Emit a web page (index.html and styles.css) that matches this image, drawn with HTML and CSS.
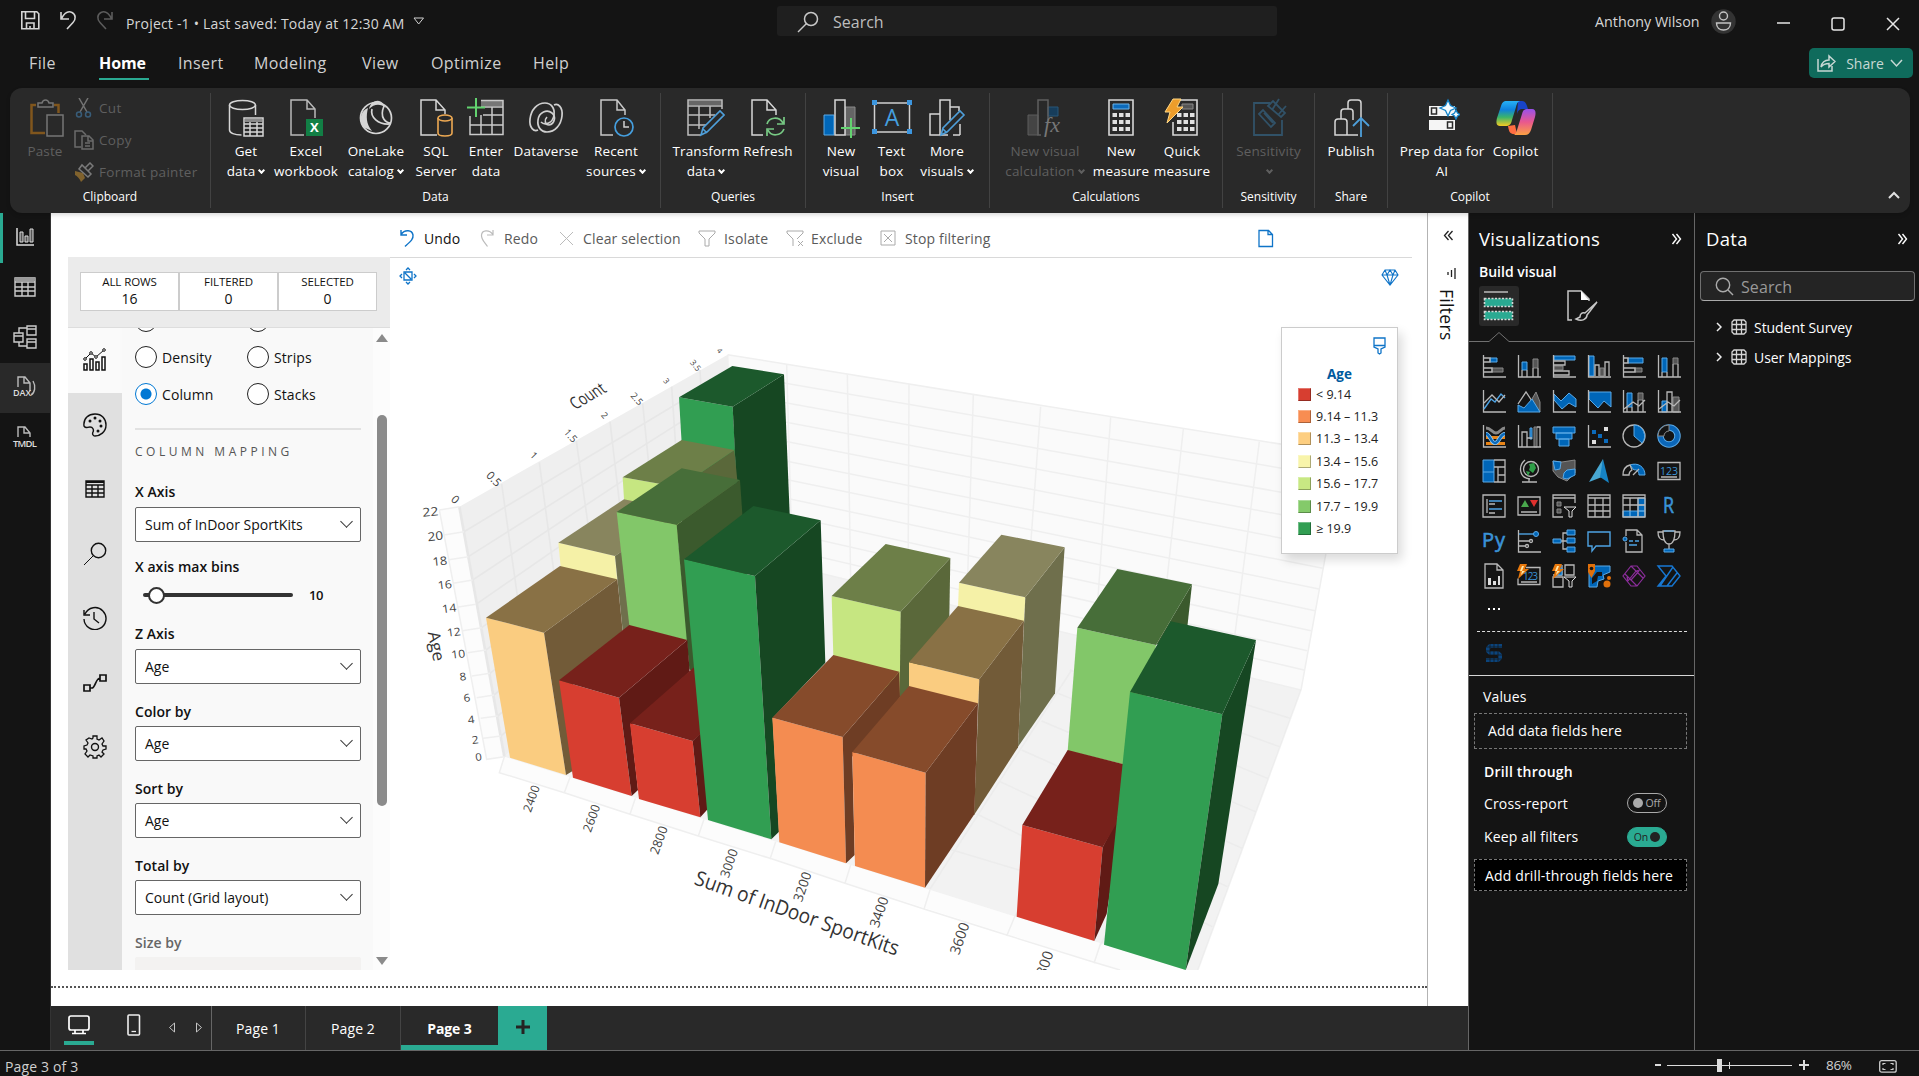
FILE: index.html
```html
<!DOCTYPE html>
<html lang="en">
<head>
<meta charset="utf-8">
<title>Project -1</title>
<link rel="stylesheet" href="styles.css">
</head>
<body>
<div class="app">
<header class="titlebar">
  <svg class="ic quick" width="100" height="26" viewBox="0 0 100 26"><g fill="none" stroke="#d6d6d6" stroke-width="1.6"><path d="M1.8 3.8h15l2 2v15h-17zM5.5 4v6.5h9V4M6.5 21v-6h7.500v6M10 21v-3"/><path d="M41 4v7h8M41.500 10.500C45 4 49 3 52 4.500c4 2 4 7 1 10L47 21"/></g><path fill="none" stroke="#5c5c5c" stroke-width="1.600" d="M92 4v7h-8M91.500 10.500C88 4 84 3 81 4.500c-4 2-4 7-1 10L86 21"/></svg>
  <span class="project">Project -1 • Last saved: Today at 12:30 AM</span>
  <svg class="tri" width="12" height="9"><path d="M1 1h9.500L5.700 7z" fill="none" stroke="#d0d0d0"/></svg>
  <div class="topsearch"><svg width="22" height="22" viewBox="0 0 22 22"><g fill="none" stroke="#c8c8c8" stroke-width="1.500"><circle cx="14" cy="8" r="6.500"/><path d="M9.500 12.500L1 21"/></g></svg><span>Search</span></div>
  <span class="user">Anthony Wilson</span>
  <svg class="avatar" width="25" height="25"><circle cx="12.500" cy="12.500" r="12.200" fill="#333"/><g fill="none" stroke="#c4c4c4" stroke-width="1.400"><circle cx="12.500" cy="7" r="4"/><path d="M5.500 14h14c0 5-3.500 7-7 7s-7-2-7-7z"/></g></svg>
  <svg class="winbtns" width="130" height="20"><g fill="none" stroke="#e6e6e6" stroke-width="1.500"><path d="M3 9h13"/><rect x="58" y="4" width="12" height="12" rx="2"/><path d="M113 4l12 12M125 4l-12 12"/></g></svg>
</header>
<nav class="menubar">
  <span class="m1">File</span><span class="m2 active">Home</span><span class="m3">Insert</span><span class="m4">Modeling</span><span class="m5">View</span><span class="m6">Optimize</span><span class="m7">Help</span>
  <button class="share"><svg width="20" height="20" viewBox="0 0 20 20"><g fill="none" stroke="#c7d8d4" stroke-width="1.500"><path d="M2 6v12h14v-5"/><path d="M5 14c1-5 4-7 8-7V3l6 5.500-6 5.500V10.500c-4 0-6 1-8 3.500z"/></g></svg><span>Share</span><svg width="13" height="9"><path d="M1 1l5.500 6L12 1" fill="none" stroke="#c7d8d4" stroke-width="1.500"/></svg></button>
</nav>

<section class="ribbon">
  <div class="group clip">
    <div class="items">
      <div class="cmd off paste"><svg width="36" height="40" viewBox="0 0 36 40"><path d="M7 7H2.500v28H16M25 7h4.500v8" fill="none" stroke="#80561d" stroke-width="2.500"/><path d="M9 9V5h4c1-4 6-4 7 0h4v4zM18 17h16v21H18z" fill="#292929" stroke="#757575" stroke-width="1.500"/></svg><span>Paste</span></div>
      <div class="smalls">
        <div class="small cut"><svg width="20" height="20" viewBox="0 0 20 20"><path d="M5 0l8 14M14 0L6 14" fill="none" stroke="#737373" stroke-width="1.500"/><g fill="none" stroke="#385c78" stroke-width="1.500"><circle cx="5" cy="16.500" r="2.500"/><circle cx="14" cy="16.500" r="2.500"/></g></svg><span>Cut</span></div>
        <div class="small"><svg width="20" height="20" viewBox="0 0 20 20"><g fill="none" stroke="#6b6b6b" stroke-width="1.500"><path d="M7 17H1V1h7l4 4"/><path d="M8 6h7l4 4v9H8zM14 6v5h5M11 13h5M11 16h5"/></g></svg><span>Copy</span></div>
        <div class="small"><svg width="20" height="20" viewBox="0 0 20 20"><path d="M1 9l8 2 2 5-4 4C6 17 3 14 1 13z" fill="#80622d"/><path d="M5 7l9 8 3-3-9-9zM11 6l5-5 3 3-5 5" fill="none" stroke="#7a7a7a" stroke-width="1.500"/></svg><span>Format painter</span></div>
      </div>
    </div><div class="gname">Clipboard</div>
  </div>
  <div class="group data">
    <div class="items">
      <div class="cmd w62"><svg width="36" height="40" viewBox="0 0 36 40"><g fill="none" stroke="#d6d6d6" stroke-width="1.500"><ellipse cx="14.500" cy="7" rx="13" ry="4.500"/><path d="M1.500 7v25c0 3 5 5 12 5M27.500 7v10"/><path d="M16 20h19v18H16zM16 26h19M16 30h19M16 34h19M22 24v14M29 24v14"/></g><path fill="#8a8a8a" d="M17 21h17v3H17z"/></svg><span>Get<br>data<i class="dn"></i></span></div>
      <div class="cmd w58"><svg width="36" height="40" viewBox="0 0 36 40"><path d="M16 37H3V2h16l8 9v9M19 2v9h8" fill="none" stroke="#b9b9b9" stroke-width="1.500"/><path fill="#127f45" d="M18 21h17v17H18z"/><text x="26.500" y="34" text-anchor="middle" font-size="13" font-weight="700" fill="#fff">X</text></svg><span>Excel<br>workbook</span></div>
      <div class="cmd w82"><svg width="36" height="40" viewBox="0 0 36 40"><g fill="none" stroke="#d6d6d6" stroke-width="1.700"><circle cx="18" cy="20" r="15.500"/><path d="M14 11c-2 8 6 16 18 15M26 8c-5 12 2 17 7 17"/></g><path fill="#d6d6d6" d="M11 11c2-9 11-11 15-4l2 3c-6-5-12-4-17 1zM10 10C4 12 0 20 5 29l9 4C8 26 8 18 10 10z"/></svg><span>OneLake<br>catalog<i class="dn"></i></span></div>
      <div class="cmd w38"><svg width="36" height="40" viewBox="0 0 36 40"><path d="M19 37H3V2h15l9 10v4M18 2v10h9" fill="none" stroke="#d6d6d6" stroke-width="1.500"/><g fill="#292929" stroke="#eda953" stroke-width="1.600"><path d="M20 20v15c0 4 14 4 14 0V20"/><ellipse cx="27" cy="20" rx="7" ry="3"/></g></svg><span>SQL<br>Server</span></div>
      <div class="cmd w62"><svg width="38" height="40" viewBox="0 0 38 40"><path fill="#767676" d="M14 3h22v5H14z"/><path d="M14 2.500h22v34H3V18M3 27h33M16 17h20M14 9h22M14 17v19M25 9v27" fill="none" stroke="#cacaca" stroke-width="1.500"/><path d="M9 0v19M0 9.500h18" stroke="#62d26f" stroke-width="2"/></svg><span>Enter<br>data</span></div>
      <div class="cmd w58"><svg width="38" height="40" viewBox="0 0 38 40"><g fill="none" stroke="#d0d0d0" stroke-width="1.700"><path d="M27 7c4-2 9 2 8 11-1 9-7 16-15 16-6 0-10-5-9-12 1-8 9-11 14-7 4 3 3 11-3 12-4 0-5-5-2-8"/><path d="M11 32c-4 2-9-2-8-11C4 12 10 5 18 5c6 0 10 5 9 12-1 8-9 11-13 7"/></g></svg><span>Dataverse</span></div>
      <div class="cmd w82"><svg width="38" height="40" viewBox="0 0 38 40"><path d="M16 37H4V2h16l8 10v5M20 2v10h8" fill="none" stroke="#c8c8c8" stroke-width="1.500"/><circle cx="27" cy="29" r="9" fill="#292929" stroke="#459fdf" stroke-width="1.700"/><path d="M27 23v6h5" fill="none" stroke="#d0d0d0" stroke-width="1.500"/></svg><span>Recent<br>sources<i class="dn"></i></span></div>
    </div><div class="gname">Data</div>
  </div>
  <div class="group queries">
    <div class="items">
      <div class="cmd w90"><svg width="38" height="40" viewBox="0 0 38 40"><path fill="#666" d="M1 3h34v4H1z"/><path d="M14 37H1V2h34v9M1 8h34M1 17h27M1 27h20M12 8v23M23 8v12" fill="none" stroke="#bdbdbd" stroke-width="1.500"/><path d="M14 37l2-7 17-17 4 4-17 17zM16 31l4 4" fill="#292929" stroke="#4e9fda" stroke-width="1.600"/></svg><span>Transform<br>data<i class="dn"></i></span></div>
      <div class="cmd w34"><svg width="36" height="40" viewBox="0 0 36 40"><path d="M13 37H2V2h15l9 10v5M17 2v10h9" fill="none" stroke="#d6d6d6" stroke-width="1.500"/><path d="M17 26c2-7 12-8 16-1M34 19v7h-7M34 31c-3 7-13 8-16 1M17 38v-7h7" fill="none" stroke="#77c984" stroke-width="1.700"/></svg><span>Refresh</span></div>
    </div><div class="gname">Queries</div>
  </div>
  <div class="group insert">
    <div class="items">
      <div class="cmd w70"><svg width="38" height="40" viewBox="0 0 38 40"><path fill="#0066b8" stroke="#5aa9e6" d="M2 17h10v20H2z"/><path fill="#656565" stroke="#8b8b8b" d="M23 9h10v28H23z"/><path fill="#292929" stroke="#d6d6d6" stroke-width="1.500" d="M13 2h10v35H13z"/><path d="M29 20v20M19 30h19" stroke="#62d26f" stroke-width="2"/></svg><span>New<br>visual</span></div>
      <div class="cmd w31"><svg width="40" height="40" viewBox="0 0 40 40"><path fill="none" stroke="#d0d0d0" stroke-width="1.500" d="M2.500 5h35v29h-35z"/><path fill="#3c96df" d="M0 2h5v5H0zM35 2h5v5h-5zM0 31h5v5H0zM35 31h5v5h-5z"/><text x="20" y="28" text-anchor="middle" font-size="23" fill="#459fdf">A</text></svg><span>Text<br>box</span></div>
      <div class="cmd w80"><svg width="38" height="40" viewBox="0 0 38 40"><path fill="none" stroke="#d6d6d6" stroke-width="1.500" d="M12 37V2h10v20M12 16H2v21h10M22 9h9v4M20 37h-8M32 37V26M32 37h-7"/><path d="M13 37l2-7 17-17 4 4-17 17zM15 31l4 4" fill="#292929" stroke="#4e9fda" stroke-width="1.600"/></svg><span>More<br>visuals<i class="dn"></i></span></div>
    </div><div class="gname">Insert</div>
  </div>
  <div class="group calc">
    <div class="items">
      <div class="cmd off w110"><svg width="40" height="40" viewBox="0 0 40 40"><path fill="#444" stroke="#5c5c5c" d="M3 17h10v20H3z"/><path fill="#173d5b" stroke="#285778" d="M23 9h10v9H23z"/><path fill="none" stroke="#5f5f5f" stroke-width="1.500" d="M16 37h-3V2h10v20"/><text x="19" y="34" font-size="22" font-style="italic" class="serif" fill="#777">fx</text></svg><span>New visual<br>calculation<i class="dn"></i></span></div>
      <div class="cmd w42"><svg width="26" height="40" viewBox="0 0 26 40"><path fill="none" stroke="#d6d6d6" stroke-width="1.600" d="M1 2h24v35H1z"/><path fill="#0b6abb" stroke="#6db4ea" d="M5 6h16v5H5z"/><path stroke="#e0e0e0" stroke-width="4" stroke-dasharray="4.500 2" d="M4.500 17h18M4.500 24h18M4.500 31h18"/></svg><span>New<br>measure</span></div>
      <div class="cmd w80"><svg width="38" height="40" viewBox="0 0 38 40"><path fill="none" stroke="#d6d6d6" stroke-width="1.600" d="M17 2h17v35H10V24"/><path fill="#555" stroke="#8a8a8a" d="M19 6h11v5H19z"/><path stroke="#e0e0e0" stroke-width="4" stroke-dasharray="4.500 2" d="M14 17h18M14 24h18M14 31h18"/><path fill="#ed9d2b" stroke="#ffd784" d="M10 1h8l-4 8h6L4 25l3-11H2z"/></svg><span>Quick<br>measure</span></div>
    </div><div class="gname">Calculations</div>
  </div>
  <div class="group sens">
    <div class="items"><div class="cmd off w91"><svg width="38" height="40" viewBox="0 0 38 40"><g fill="none" stroke="#315268" stroke-width="1.800"><path d="M20 5H4v32h28V22"/><path d="M9 16l4-4 12 13-4 4zM18 8l5-5 12 12-4 4zM22 12l7-11M28 17l8-9M14 15l9 10"/></g></svg><span>Sensitivity<br><i class="dn"></i></span></div></div><div class="gname">Sensitivity</div>
  </div>
  <div class="group shareg">
    <div class="items"><div class="cmd w72"><svg width="38" height="40" viewBox="0 0 38 40"><g fill="none" stroke="#d6d6d6" stroke-width="1.500"><path d="M26 37H3V24c0-2 1-3 3-3h6c2 0 3 1 3 3v13M9 21v-7c0-2 1-3 3-3h6c2 0 3 1 3 3v8M16 11V5c0-2 1-3 3-3h7c2 0 3 1 3 3v15"/></g><path d="M29 39V20M21 28l8-8 8 8" fill="none" stroke="#4e9fda" stroke-width="1.800"/></svg><span>Publish</span></div></div><div class="gname">Share</div>
  </div>
  <div class="group cop">
    <div class="items">
      <div class="cmd w108"><svg class="prep" width="32" height="40" viewBox="0 0 32 40"><path fill="#f5f5f5" d="M1 8h26v10H1zM1 22h26v10H1z"/><path fill="none" stroke="#292929" stroke-width="1.500" d="M3.500 10h5v6h-5zM19.500 24h5v6h-5z"/><path fill="#f4fbff" stroke="#1383c8" stroke-width="1.300" d="M20 2l2.500 5.500L28 10l-5.500 2.500L20 18l-2.500-5.500L12 10l5.500-2.500zM28 12l1.500 3 2.500 1.500-2.500 1.500-1.500 3-1.500-3-2.500-1.500 2.500-1.500z"/></svg><span>Prep data for<br>AI</span></div>
      <div class="cmd w39"><svg width="40" height="40" viewBox="0 0 40 40"><defs><linearGradient id="ca" x1="0" y1="0" x2="0" y2="1"><stop offset="0" stop-color="#27b1f5"/><stop offset=".35" stop-color="#0f81dc"/><stop offset=".65" stop-color="#3bb469"/><stop offset="1" stop-color="#f7cb22"/></linearGradient><linearGradient id="cb" x1="0" y1="0" x2="0" y2="1"><stop offset="0" stop-color="#9851eb"/><stop offset=".5" stop-color="#e9588e"/><stop offset="1" stop-color="#fba143"/></linearGradient></defs><path fill="#1844c8" d="M22 3h4c3 0 4 2 5 5l1 3h-5c-4 0-5 2-6 5z"/><path fill="#ff6d42" d="M12 28l7-1 2 9h-3c-4 0-5-2-6-8z"/><path fill="url(#ca)" d="M11 3h14c-3 0-4 2-5 6l-4 13c-1 4-2 6-7 6H4c-4 0-4-4-3-8l4-12c1-3 2-5 6-5z"/><path fill="url(#cb)" d="M29 37H17c2 0 3-2 4-5l5-16c1-4 2-5 6-5h4c4 0 4 4 3 8l-4 13c-1 3-3 5-6 5z"/></svg><span>Copilot</span></div>
    </div><div class="gname">Copilot</div>
  </div>
  <svg class="collapse" width="14" height="9"><path d="M2 7l5-5 5 5" fill="none" stroke="#e0e0e0" stroke-width="2"/></svg>
</section>

<main class="main">
<aside class="rail">
  <div class="on"><svg width="24" height="24" viewBox="0 0 24 24"><path d="M4 3v17h17" fill="none" stroke="#ddd" stroke-width="1.500"/><path d="M7 7h3v10H7zM12 11h3v6h-3zM17 4h3v13h-3z" fill="#555" stroke="#ddd"/></svg></div>
  <div><svg width="24" height="24" viewBox="0 0 24 24"><path d="M2 3h20v18H2zM2 7h20M2 12h20M2 16h20M9 7v14M15 7v14" fill="none" stroke="#ccc" stroke-width="1.400"/><path fill="#999" d="M2 3h20v3H2z"/></svg></div>
  <div><svg width="26" height="26" viewBox="0 0 26 26"><g fill="none" stroke="#ccc" stroke-width="1.400"><path d="M2 9h9v9H2zM15 2h9v9h-9zM15 15h9v9h-9zM7 9V4h8M7 18v4h8M2 12h9M15 5h9M15 18h9"/></g></svg></div>
  <div class="sel"><svg width="26" height="26" viewBox="0 0 26 26"><path d="M6 13V3h7l5 6v8M12 3v6h6M21 7c3 5 2 12-2 14" fill="none" stroke="#bbb" stroke-width="1.400"/><text x="1" y="22" font-size="9" font-weight="600" textLength="18" fill="#ddd">DAX</text></svg></div>
  <div><svg width="26" height="26" viewBox="0 0 26 26"><path d="M6 13V3h7l5 6v4M12 3v6h6" fill="none" stroke="#bbb" stroke-width="1.400"/><text x="1" y="23" font-size="9.500" font-weight="600" textLength="24" fill="#ddd">TMDL</text></svg></div>
</aside>

<div class="center">
<div class="work">
<section class="canvas">
  <div class="visual">
    <div class="vtools">
      <span class="t live"><svg width="15" height="19" viewBox="0 0 15 19"><path d="M1 1v5h6M1 5.500C5 0 12 1 13 6c.5 4-2 6-8 11.500" fill="none" stroke="#0f74c8" stroke-width="1.400"/></svg>Undo</span>
      <span class="t redo"><svg width="15" height="19" viewBox="0 0 15 19"><path d="M13 1v5H7M13 5.500C9 0 2 1 1.500 6c-.5 4 2 6 6 11.500" fill="none" stroke="#bbb" stroke-width="1.200"/></svg>Redo</span>
      <span class="t clr"><svg width="15" height="19" viewBox="0 0 15 19"><path d="M1 3l13 13M14 3L1 16" fill="none" stroke="#bbb"/></svg>Clear selection</span>
      <span class="t iso"><svg width="18" height="19" viewBox="0 0 18 19"><path d="M1 2h16v2l-6 6v7H7v-7L1 4z" fill="none" stroke="#aaa"/></svg>Isolate</span>
      <span class="t exc"><svg width="18" height="19" viewBox="0 0 18 19"><path d="M1 2h16v2l-6 6M7 17v-7L1 4V2M12 12l5 5M17 12l-5 5" fill="none" stroke="#aaa"/></svg>Exclude</span>
      <span class="t stp"><svg width="16" height="19" viewBox="0 0 16 19"><path d="M1 2h14v14H1zM4 5l8 8M12 5l-8 8" fill="none" stroke="#aaa"/></svg>Stop filtering</span>
      <svg class="doc" width="16" height="19"><path d="M1 1.500h9.500l4 4V17.500H1zM10 1.500v4h4.500" fill="none" stroke="#0f74c8" stroke-width="1.300"/></svg>
    </div>
    <div class="vbody">
      <div class="panel">
        <div class="counts"><div><b>ALL ROWS</b><span>16</span></div><div><b>FILTERED</b><span>0</span></div><div><b>SELECTED</b><span>0</span></div></div>
        <div class="pmain">
          <div class="ptabs">
            <div class="cur"><svg width="24" height="24" viewBox="0 0 24 24"><path d="M1 16h3v6H1zM7 11h3v11H7zM13 14h3v8h-3zM19 9h3v13h-3z" fill="#fff" stroke="#111" stroke-width="1.500"/><path d="M2 11l6-6 5 4 8-7" fill="none" stroke="#111"/><g fill="#fff" stroke="#111"><circle cx="2" cy="11" r="1.300"/><circle cx="8" cy="5" r="1.300"/><circle cx="13" cy="9" r="1.300"/><circle cx="21" cy="2" r="1.300"/></g></svg></div>
            <div><svg width="24" height="24" viewBox="0 0 24 24"><path d="M1 13C0 5 6 1 12 1c7 0 11 5 11 11 0 7-6 11-11 11-2 0-3-2-2-4s0-5-3-5-4 2-6-1z" fill="none" stroke="#111" stroke-width="1.400"/><g fill="#111"><circle cx="7" cy="8" r="1.500"/><circle cx="12" cy="5" r="1.500"/><circle cx="17" cy="8" r="1.500"/><circle cx="18" cy="13" r="1.500"/><circle cx="15" cy="18" r="1.500"/></g></svg></div>
            <div><svg width="20" height="18" viewBox="0 0 20 18"><path d="M1 1h18v16H1zM1 5h18M1 9h18M1 13h18M7 5v12M13 5v12" fill="none" stroke="#111" stroke-width="1.400"/><path fill="#111" d="M1 1h18v2H1z"/></svg></div>
            <div><svg width="24" height="24" viewBox="0 0 24 24"><path d="M10 14L1 23" stroke="#111"/><circle cx="15.500" cy="8.500" r="7.200" fill="none" stroke="#111" stroke-width="1.400"/></svg></div>
            <div><svg width="24" height="24" viewBox="0 0 24 24"><path d="M1 4v5h6M2 8a11 11 0 1 1-1 5M11 6v7l5 4" fill="none" stroke="#111" stroke-width="1.400"/></svg></div>
            <div><svg width="24" height="20" viewBox="0 0 24 20"><path d="M1 12h6v6H1zM17 2h6v6h-6zM7 15h2c3 0 4-10 8-10" fill="none" stroke="#111" stroke-width="1.700"/></svg></div>
            <div><svg width="24" height="24" viewBox="0 0 24 24"><circle cx="12" cy="12" r="3.500" fill="none" stroke="#111" stroke-width="1.400"/><path d="M10 1h4v3l2 1 3-2 2 3-2 3 1 2h3v3l-3 1-1 2 2 2-3 3-2-2-2 1v2h-4v-2l-3-1-2 2-3-3 2-3-1-2H1v-3l3-1 1-2-2-3 3-2 3 1 1-1z" fill="none" stroke="#111" stroke-width="1.300"/></svg></div>
          </div>
          <div class="form">
            <div class="radios clipped"><label><i></i></label><label><i></i></label></div>
            <div class="radios"><label><i></i>Density</label><label><i></i>Strips</label></div>
            <div class="radios r2"><label><i class="chk"></i>Column</label><label><i></i>Stacks</label></div>
            <hr>
            <div class="sect">COLUMN MAPPING</div>
            <div class="lab l1">X Axis</div><div class="select">Sum of InDoor SportKits<i></i></div>
            <div class="lab l2">X axis max bins</div><div class="slider"><div class="track"><i></i></div><span>10</span></div>
            <div class="lab l3">Z Axis</div><div class="select">Age<i></i></div>
            <div class="lab">Color by</div><div class="select">Age<i></i></div>
            <div class="lab">Sort by</div><div class="select">Age<i></i></div>
            <div class="lab">Total by</div><div class="select">Count (Grid layout)<i></i></div>
            <div class="lab dim">Size by</div><div class="select ghost"></div>
          </div>
          <div class="scroll"><i class="up"></i><div class="thumb"></div><i class="down"></i></div>
        </div>
      </div>
      <div class="plot">
        <svg class="chart" viewBox="-30 144 3066 2136" width="1022" height="712">
          <g class="wall">
            <polygon fill="#fcfcfc" points="118,900 178,890 313,1640 260,1648"/>
            <polygon fill="#fcfcfc" points="313,1640 2390,2290 2380,2300 660,2300 2160,2280 298,1688"/>
            <polygon fill="#efefef" points="178,890 983,434 1005,1026 313,1640"/>
            <polygon fill="#fafafa" points="983,434 2832,733 2703,1440 1005,1026"/>
            <polygon fill="#f2f2f2" points="313,1640 1005,1026 2703,1440 2390,2290"/>
          </g>
          <g fill="none" stroke="#e7e7e7" stroke-width="5">
            <path d="M192 965L983 490M205 1040L983 547M218 1110L983 604M228 1183L983 660M245 1253L983 718M258 1320L983 775M270 1390L983 832M282 1455L990 880M293 1518L990 930M303 1578L995 980"/>
            <path d="M305 822L400 1500M418 757L490 1300M529 693L600 1200M630 635L690 1150M728 580L780 1100M815 530L850 1050M900 480L930 1030"/>
            <path d="M178 890L313 1640" stroke-width="8"/>
          </g>
          <g fill="none" stroke="#efefef" stroke-width="4.500">
            <path d="M983 434L2832 733"/>
            <path d="M983 490L2817 804M983 547L2805 876M983 604L2793 942M983 660L2780 1011M983 718L2768 1075M985 773L2757 1137M987 828L2745 1202M990 880L2733 1262M993 930L2722 1322M997 980L2712 1380M1000 1026L2703 1440"/>
            <path d="M983 434L1005 1026M1160 465L1177 1060M1342 493L1352 1110M1527 522L1524 1150M1720 555L1700 1195M1922 590L1875 1240M2132 622L2085 1290M2350 657L2276 1340M2578 695L2490 1390M2832 733L2703 1440"/>
            <path stroke="#e8e8e8" d="M1590 2037L2015 1380M1845 2118L2270 1450M2102 2204L2480 1450M1590 1900L2390 2140M1730 1812L2437 2150M1800 1715L2482 2030M1865 1620L2527 1915M1925 1533L2566 1805M1975 1450L2603 1705M2010 1380L2638 1610M2050 1330L2670 1525M2390 2290L2703 1440" opacity=".6"/>
            <path d="M118 900L260 1648 313 1640M118 900L178 890M132 975L192 965M146 1049L205 1040M160 1120L218 1110M170 1192L228 1183M188 1262L245 1253M203 1328L258 1320M216 1398L270 1390M230 1463L282 1455M242 1525L293 1518M250 1585L303 1578"/>
            <path d="M313 1640L298 1688 493 1748 690 1813 895 1878 1110 1945 1335 2020 1572 2097 1820 2175 2082 2257 2160 2280M510 1702L493 1748M706 1765L690 1813M912 1828L895 1878M1127 1895L1110 1948M1352 1965L1335 2020M1590 2040L1572 2097M1845 2118L1820 2178M2102 2200L2082 2260"/>
          </g>
          <g class="deepgreen"><polygon class="f" points="837,562 998,590 1020,1000 860,960"/><polygon class="s" points="998,590 1152,493 1169,912 1100,960 1018,1000"/><polygon class="t" points="837,562 997,468 1152,493 998,590"/></g>
          <g class="lime"><polygon class="f" points="668,802 838,832 845,1000 680,1000"/><polygon class="s" points="838,832 1003,720 1012,812 850,1000"/><polygon class="t" points="668,802 845,690 1003,720 838,832"/></g>
          <g class="cream"><polygon class="f" points="475,998 645,1038 652,1115 482,1070"/><polygon class="s" points="645,1038 700,1000 700,1400 668,1260"/><polygon class="t" points="475,998 672,868 850,905 645,1038"/></g>
          <g class="green"><polygon class="f" points="650,906 830,945 864,1292 688,1247"/><polygon class="s" points="830,945 1020,810 1040,1100 900,1400 868,1378"/><polygon class="t" points="650,906 845,775 1020,810 830,945"/></g>
          <g class="sand"><polygon class="f" points="258,1223 432,1268 498,1695 330,1643"/><polygon class="s" points="432,1268 652,1108 668,1262 520,1400 518,1683 498,1695"/><polygon class="t" points="258,1223 480,1068 652,1108 432,1268"/></g>
          <g class="red"><polygon class="f" points="477,1411 657,1463 695,1758 519,1703"/><polygon class="s" points="657,1463 862,1290 869,1385 692,1545 714,1740 695,1758"/><polygon class="t" points="477,1411 688,1245 862,1290 657,1463"/></g>
          <g class="red"><polygon class="f" points="690,1540 878,1593 901,1822 717,1767"/><polygon class="s" points="878,1593 940,1530 940,1780 918,1803 901,1822"/><polygon class="t" points="690,1540 880,1373 1000,1400 940,1537 878,1593"/></g>
          <g class="lime"><polygon class="f" points="1295,1158 1502,1205 1504,1480 1300,1338"/><polygon class="s" points="1502,1205 1651,1044 1648,1218 1504,1470 1499,1460"/><polygon class="t" points="1295,1158 1457,1002 1651,1044 1502,1205"/></g>
          <g class="deepgreen"><polygon class="f" points="852,1048 1065,1098 1114,1888 924,1830"/><polygon class="s" points="1065,1098 1262,931 1276,1358 1118,1524 1137,1865 1114,1888"/><polygon class="t" points="852,1048 1060,888 1262,931 1065,1098"/></g>
          <g class="rust"><polygon class="f" points="1117,1523 1328,1581 1338,1960 1138,1897"/><polygon class="s" points="1328,1581 1498,1385 1500,1462 1357,1640 1364,1935 1338,1960"/><polygon class="t" points="1117,1523 1300,1335 1498,1385 1328,1581"/></g>
          <g class="cream"><polygon class="f" points="1677,1118 1876,1162 1872,1235 1674,1192"/><polygon class="s" points="1876,1162 1994,1012 1965,1450 1854,1610"/><polygon class="t" points="1677,1118 1804,974 1994,1012 1876,1162"/></g>
          <g class="sand"><polygon class="f" points="1527,1357 1738,1408 1735,1482 1527,1430"/><polygon class="s" points="1738,1408 1872,1232 1854,1612 1722,1815"/><polygon class="t" points="1527,1357 1674,1188 1872,1232 1738,1408"/></g>
          <g class="rust"><polygon class="f" points="1357,1626 1577,1688 1575,2033 1365,1968"/><polygon class="s" points="1577,1688 1734,1480 1723,1813 1575,2033"/><polygon class="t" points="1357,1626 1527,1428 1734,1480 1577,1688"/></g>
          <g class="green"><polygon class="f" points="2032,1253 2268,1305 2200,1670 2003,1622"/><polygon class="s" points="2268,1305 2376,1123 2362,1250"/><polygon class="t" points="2032,1253 2152,1077 2376,1123 2268,1305"/></g>
          <g class="red"><polygon class="f" points="1867,1845 2108,1912 2083,2193 1850,2120"/><polygon class="s" points="2108,1912 2170,1790 2120,2112 2083,2193"/><polygon class="t" points="1867,1845 2003,1620 2180,1665 2150,1840 2108,1912"/></g>
          <g class="deepgreen"><polygon class="f" points="2190,1446 2467,1513 2357,2280 2112,2204"/><polygon class="s" points="2467,1513 2568,1290 2455,2022 2357,2280"/><polygon class="t" points="2190,1446 2312,1234 2568,1290 2467,1513"/></g>
          <g class="ticks age">
            <text transform="translate(92 918) rotate(-5) scale(1.16 1)" font-size="36">22</text><text transform="translate(107 991) rotate(-6) scale(1.14 1)" font-size="36">20</text><text transform="translate(121 1066) rotate(-6) scale(1.1 1)" font-size="35">18</text><text transform="translate(136 1136) rotate(-7) scale(1.1 1)" font-size="34">16</text><text transform="translate(149 1207) rotate(-7) scale(1.1 1)" font-size="34">14</text><text transform="translate(163 1278) rotate(-7) scale(1.1 1)" font-size="33">12</text><text transform="translate(176 1344) rotate(-7) scale(1.1 1)" font-size="33">10</text><text transform="translate(190 1411) rotate(-7) scale(1.1 1)" font-size="32">8</text><text transform="translate(202 1475) rotate(-7) scale(1.1 1)" font-size="32">6</text><text transform="translate(215 1540) rotate(-7) scale(1.1 1)" font-size="32">4</text><text transform="translate(227 1601) rotate(-7) scale(1.1 1)" font-size="32">2</text><text transform="translate(237 1652) rotate(-7) scale(1.1 1)" font-size="31">0</text>
          </g>
          <g class="ticks">
            <text transform="translate(158 877) rotate(42)" font-size="34">0</text><text transform="translate(273 815) rotate(46)" font-size="34">0.5</text><text transform="translate(394 743) rotate(46)" font-size="29">1</text><text transform="translate(504 684) rotate(48)" font-size="30">1.5</text><text transform="translate(607 622) rotate(48)" font-size="27">2</text><text transform="translate(703 573) rotate(48)" font-size="28">2.5</text><text transform="translate(793 518) rotate(50)" font-size="24">3</text><text transform="translate(880 472) rotate(50)" font-size="25">3.5</text><text transform="translate(953 427) rotate(50)" font-size="21">4</text>
          </g>
          <g class="ticks">
            <text transform="translate(406 1770) rotate(-70)" font-size="36">2400</text><text transform="translate(587 1829) rotate(-70)" font-size="37">2600</text><text transform="translate(789 1895) rotate(-70)" font-size="38">2800</text><text transform="translate(1000 1964) rotate(-71)" font-size="39">3000</text><text transform="translate(1220 2035) rotate(-71)" font-size="40">3200</text><text transform="translate(1451 2111) rotate(-71)" font-size="41.500">3400</text><text transform="translate(1693 2190) rotate(-71)" font-size="43">3600</text><text transform="translate(1945 2277) rotate(-71)" font-size="44">3800</text>
          </g>
          <g class="axis">
            <text transform="translate(574 572) rotate(-30) skewX(8)" font-size="52" textLength="112" lengthAdjust="spacingAndGlyphs">Count</text>
            <text transform="translate(92 1312) rotate(79)" font-size="50" textLength="90" lengthAdjust="spacingAndGlyphs">Age</text>
            <text transform="translate(1184 2130) rotate(19.500)" font-size="62" textLength="645" lengthAdjust="spacingAndGlyphs">Sum of InDoor SportKits</text>
          </g>
        </svg>
        <svg class="orbit" width="18" height="18" viewBox="0 0 18 18"><path d="M5 5h8v8H5zM6 6l6 6M7 3l2-2 2 2M7 15l2 2 2-2M3 7L1 9l2 2M15 7l2 2-2 2" fill="none" stroke="#0f74c8" stroke-width="1.300"/></svg>
        <svg class="gem" width="18" height="17" viewBox="0 0 18 17"><path d="M4 1h10l3 5-8 10L1 6zM1 6h16M6 6l3 10 3-10M4 1l2 5 3-5 3 5 2-5" fill="none" stroke="#0f74c8" stroke-width="1.100"/></svg>
        <div class="legend">
          <svg width="13" height="18" viewBox="0 0 13 18"><path d="M1 1h11v7.500H1zM1 8v2l4 2v4l1.500 1L8 16v-4l4-2V8" fill="none" stroke="#0f74c8" stroke-width="1.300"/></svg>
          <h4>Age</h4>
          <p><i class="c1"></i>&lt; 9.14</p><p><i class="c2"></i>9.14 – 11.3</p><p><i class="c3"></i>11.3 – 13.4</p><p><i class="c4"></i>13.4 – 15.6</p><p><i class="c5"></i>15.6 – 17.7</p><p><i class="c6"></i>17.7 – 19.9</p><p><i class="c7"></i>≥ 19.9</p>
        </div>
      </div>
    </div>
  </div>
  <div class="pageedge"></div>
</section>
<aside class="filters">
  <svg width="11" height="12"><path d="M5.500 1L1.500 5.500l4 4.500M9.500 1L5.500 5.500l4 4.500" fill="none" stroke="#222" stroke-width="1.300"/></svg>
  <svg class="fi" width="12" height="12"><path d="M10 1v11M6.500 3v7M3 5v3" stroke="#222" stroke-width="1.300"/></svg>
  <span>Filters</span>
</aside>
</div>
<footer class="pages">
  <div class="dev"><svg width="24" height="22" viewBox="0 0 24 22"><path d="M4 2h16c1 0 2 1 2 2v10c0 1-1 2-2 2H4c-1 0-2-1-2-2V4c0-1 1-2 2-2zM8 16v3M16 16v3M5 19.500h14" fill="none" stroke="#fff" stroke-width="1.700"/></svg></div>
  <div class="ph"><svg width="14" height="22"><rect x="1" y="1" width="11.500" height="20" rx="1" fill="none" stroke="#eee" stroke-width="1.600"/><path d="M4.500 17.500h4.500" stroke="#eee" stroke-width="1.300"/></svg></div>
  <div class="nav"><svg width="8" height="11"><path d="M6.500 1v9L1.500 5.500z" fill="none" stroke="#c4c4c4"/></svg><svg width="8" height="11"><path d="M1.500 1v9l5-4.500z" fill="none" stroke="#c4c4c4"/></svg></div>
  <div class="pg p1">Page 1</div><div class="pg">Page 2</div><div class="pg act">Page 3</div>
  <div class="plus"><svg width="14" height="14"><path d="M7 0v14M0 7h14" stroke="#252423" stroke-width="3"/></svg></div>
</footer>
</div>

<aside class="viz">
  <div class="phead"><h2>Visualizations</h2><svg width="11" height="12"><path d="M1.500 1l4 5-4 5M5.500 1l4 5-4 5" fill="none" stroke="#fff" stroke-width="1.400"/></svg></div>
  <h3>Build visual</h3>
  <div class="modes">
    <div class="m"><svg width="32" height="34" viewBox="0 0 32 34"><path d="M1 3h24" stroke="#bbb" stroke-width="1.500"/><g fill="#2aaa92" stroke="#d6d6d6" stroke-width="1.600" stroke-dasharray="2 1.500"><path d="M1.500 9.500h28v8h-28zM1.500 22.500h28v8h-28z"/></g></svg></div>
    <svg class="fmt" width="32" height="32" viewBox="0 0 32 32"><path d="M5 30H1V1h13l8 8v2" fill="none" stroke="#c8c8c8" stroke-width="1.500"/><path fill="#fff" d="M14 1l8 9h-8z"/><path d="M30 12L18 23c-3-1-5 1-5 4l-4 2c6 3 11 0 11-4z" fill="#141414" stroke="#c8c8c8" stroke-width="1.500"/></svg>
  </div>
  <svg class="notch" width="225" height="11"><path d="M0 9.500h20l10-9 10 9h186" fill="none" stroke="#707070"/></svg>
  <div class="gallery">
    <svg viewBox="0 0 24 24"><path class="b" d="M8 4h7v4H8z"/><path class="g" d="M10 14h11v4H10z"/><path class="l" d="M1.500 1v22H24M2 4h6v4H2M2 14h8v4H2"/></svg>
    <svg viewBox="0 0 24 24"><path class="b" d="M5 8h5v8H5z"/><path class="g" d="M16 5h5v9h-5z"/><path class="l" d="M1.500 1v22H24M5 16v7M10 16v7M16 14v9M21 14v9"/></svg>
    <svg viewBox="0 0 24 24"><path class="b" d="M2 2h21v4H2z"/><path class="g" d="M2 12h9v4H2z"/><path class="l" d="M1.500 1v22H24M2 7h11v4H2M2 17h15v4H2"/></svg>
    <svg viewBox="0 0 24 24"><path class="b" d="M2 2h5v20H2z"/><path class="g" d="M13 14h4v8h-4z"/><path class="l" d="M1.500 1v22H24M8 22V11h4v11M18 22V8h4v14"/></svg>
    <svg viewBox="0 0 24 24"><path class="b" d="M6 4h15v5H6z"/><path class="g" d="M13 14h7v4h-7z"/><path class="l" d="M1.500 1v22H24M2 4h4v5H2M2 14h11v4H2"/></svg>
    <svg viewBox="0 0 24 24"><path class="b" d="M5 4h5v14H5z"/><path class="g" d="M16 4h5v6h-5z"/><path class="l" d="M1.500 1v22H24M5 18v5M10 18v5M16 10v13M21 10v13"/></svg>

    <svg viewBox="0 0 24 24"><path class="l" d="M1.500 1v22H24"/><path d="M2 20L9 10l4 3 6-8 4 4" class="bl"/><path class="l" d="M2 14l8-8 7 7 6-7"/></svg>
    <svg viewBox="0 0 24 24"><path class="g" d="M12 15l7-12 4 10v10z"/><path class="l" d="M1 15L9 3l6 9"/><path class="b" d="M1 16l6 3 8-9 8 13H1z"/></svg>
    <svg viewBox="0 0 24 24"><path class="b" d="M2 5l7 7 8-8 7 6v8l-7-4-7 6-8-9z"/><path class="l" d="M1.500 1v22H24"/></svg>
    <svg viewBox="0 0 24 24"><path class="b" d="M2 3h22v15l-7-6-6 7-9-9z"/><path class="l" d="M1.500 1v22H24"/></svg>
    <svg viewBox="0 0 24 24"><path class="b" d="M5 4h5v14H5z"/><path class="g" d="M16 4h5v7h-5z"/><path class="l" d="M1.500 1v22H24M5 18v5M10 18v5M16 11v12M21 11v12M2 20l9-7 6 4 6-6"/></svg>
    <svg viewBox="0 0 24 24"><path class="b" d="M5 12h5v11H5z"/><path class="g" d="M16 8h6v15h-6z"/><path class="l" d="M1.500 1v22H24M10 23V3h5v20M2 20l9-7 6 4 6-6"/></svg>

    <svg viewBox="0 0 24 24"><path fill="#e88417" d="M4 12h19v3H4zM4 18h19v3H4z"/><path d="M4 10c4 0 5 9 9 9s5-9 10-9" fill="none" stroke="#8fcaf5" stroke-width="4"/><path d="M4 10c4 0 5 9 9 9s5-9 10-9" fill="none" stroke="#0b6abb" stroke-width="2.500"/><path d="M4 4c5 0 6 5 10 5s5-5 9-5" fill="none" stroke="#888" stroke-width="3"/><path class="l" d="M1.500 1v22H24"/></svg>
    <svg viewBox="0 0 24 24"><path class="b" d="M13 4h2v11h-2z"/><path class="g" d="M17 3h3v20h-3z"/><path class="l" d="M1.500 1v22H24M5 23V8h5v15M10 14h5M20 3h3v20"/></svg>
    <svg viewBox="0 0 24 24"><path class="b" d="M1 3h22v6H1zM4 9h16v6H4zM7 15h10v7H7z"/></svg>
    <svg viewBox="0 0 24 24"><path class="l" d="M1.500 1v22H24"/><path fill="#0b6abb" d="M5 6h4v4H5zM11 10h4v4h-4zM17 15h4v4h-4z"/><path fill="#ddd" d="M17 3h4v4h-4zM5 16h4v4H5z"/></svg>
    <svg viewBox="0 0 24 24"><circle class="l" cx="12" cy="12" r="11"/><path class="b" d="M12 1a11 11 0 0 1 8 18l-8-7z"/></svg>
    <svg viewBox="0 0 24 24"><circle cx="12" cy="12" r="8.500" fill="none" stroke="#5aa9e6" stroke-width="6.500"/><circle cx="12" cy="12" r="8.500" fill="none" stroke="#0b66b8" stroke-width="4.500"/><path fill="#141414" stroke="#888" d="M12 1v6a5 5 0 0 0-5 5H1A11 11 0 0 1 12 1z"/></svg>

    <svg viewBox="0 0 24 24"><path class="b" d="M1 1h11v22H1zM1 13h11"/><path class="l" d="M12 1h11v22H12M12 8h11M16 8v15M16 16h7"/></svg>
    <svg viewBox="0 0 24 24"><circle class="l" cx="14" cy="10" r="7.500"/><path fill="#2f9e48" d="M12 5l5-1 2 5-3 5-4-3 1-3zM9 12l4 1-2 4z"/><path class="l" d="M8 1C1 7 2 19 13 20M12 20v3M5 23h15"/></svg>
    <svg viewBox="0 0 24 24"><path class="g" d="M1 2l9 1 13-2v13l-8 8-9-4-5-6z"/><path class="b" d="M1 2l8 1-1 7-5 1zM12 14l3-3 8-1v6l-8 4-4-1z"/></svg>
    <svg viewBox="0 0 24 24"><path fill="#48a7d2" d="M16 0l-1 18-13 5z"/><path fill="#1683c4" d="M16 0l6 24-9-6z"/></svg>
    <svg viewBox="0 0 24 24"><path class="b" d="M8 6c8-3 15 2 15 10h-6c0-4-3-6-5-5z"/><path class="l" d="M1 16C1 10 4 7 8 6l2 5c-2 1-3 3-3 5zM11 16l6-6"/></svg>
    <svg viewBox="0 0 24 24"><path class="l" d="M1 3.500h22v17H1zM4 18h16"/><text x="12" y="15.500" text-anchor="middle" font-size="10.500" fill="#3b93d6">123</text></svg>

    <svg viewBox="0 0 24 24"><path class="l" d="M1 1h22v22H1zM5 5v14M7 10h6M7 19h6"/><path class="bl" d="M7 7h13M7 15h13"/></svg>
    <svg viewBox="0 0 24 24"><path class="l" d="M1 3h22v18H1zM4 18h16"/><path fill="#49a84d" d="M4 13l4-7 4 7z"/><path fill="#e0302d" d="M13 6h8l-4 7z"/></svg>
    <svg viewBox="0 0 24 24"><path class="g" d="M5 8h4v4H5zM5 15h4v4H5z"/><path class="l" d="M11 23H1V1h22v8M1 4h22"/><path d="M12 13h12l-4 4v6h-3v-6z" fill="#141414" stroke="#ddd"/></svg>
    <svg viewBox="0 0 24 24"><path class="l" d="M1 1h22v22H1zM1 4h22M1 11h22M1 17h22M8 4v19M16 4v19"/></svg>
    <svg viewBox="0 0 24 24"><path class="b" d="M16 4h7v7h-7zM16 11h7v6h-7zM1 17h7v6H1zM8 17h8v6H8zM16 17h7v6h-7z"/><path class="l" d="M1 1h22v22H1zM1 4h22M1 11h22M8 4v13M16 4v19"/></svg>
    <svg class="lt" viewBox="0 0 24 24"><text x="6" y="19" font-size="21" textLength="11" lengthAdjust="spacingAndGlyphs">R</text></svg>

    <svg class="lt" viewBox="0 0 24 24"><text x="0" y="18" font-size="20" textLength="23">Py</text></svg>
    <svg viewBox="0 0 24 24"><path class="l" d="M1.500 1v22H24M2 12h10M2 17h6"/><circle class="l" cx="14" cy="12" r="1.500"/><circle class="l" cx="10" cy="17" r="1.500"/><path class="bl" d="M2 5h15"/><circle class="b" cx="19" cy="5" r="2.500"/></svg>
    <svg viewBox="0 0 24 24"><path class="l" d="M9 12h6M15 4h-4v16h4"/><path class="b" d="M1 10h8v4H1zM15 1h8v5h-8zM15 9h8v5h-8zM15 18h8v5h-8z"/></svg>
    <svg viewBox="0 0 24 24"><path class="bl" d="M1 3h22v14H9l-4 5v-5H1z"/></svg>
    <svg viewBox="0 0 24 24"><path class="l" d="M4 7V1h11l5 5v17H4V13M15 1v5h5"/><path class="bl" d="M7 12h4M13 12h4M7 16h8"/><circle class="b" cx="3" cy="10" r="2"/></svg>
    <svg viewBox="0 0 24 24"><path class="l" d="M6 2h12c0 8-2 13-6 13S6 10 6 2zM6 3H1c0 5 2 8 6 8M18 3h5c0 5-2 8-6 8M12 15v5"/><path class="b" d="M7 20h10v3H7zM7 2h10"/></svg>

    <svg viewBox="0 0 24 24"><path class="l" d="M3 0h12l6 6v18H3zM15 0v6h6"/><path fill="#ddd" d="M6 14h3v7H6zM11 17h3v4h-3zM16 12h2v9h-2z"/></svg>
    <svg viewBox="0 0 24 24"><path class="l" d="M9 3.500h14v17H1v-6M4 18h16"/><text x="6" y="15.500" font-size="10" textLength="15" fill="#3b93d6">123</text><path fill="#e8780c" d="M3 0h7L8 5h4L1 15l2-8H0z"/><path fill="#ffe6a8" d="M5 2h2L5 7h3l-4 4 1-4H3z"/></svg>
    <svg viewBox="0 0 24 24"><path class="l" d="M13 1h9v10h-9zM1 13h10v10H1zM10 1v10H1"/><path class="b" d="M6 4h4v7H6z"/><path d="M12 13h12l-4 4v6h-3v-6z" fill="#141414" stroke="#ddd"/><path fill="#e8780c" d="M3 0h7L8 5h4L1 15l2-8H0z"/><path fill="#ffe6a8" d="M5 2h2L5 7h3l-4 4 1-4H3z"/></svg>
    <svg viewBox="0 0 24 24"><path class="b" d="M2 2h21v6l-7 3 1 4-6 2-1 6H2z"/><path fill="#141414" d="M10 8h5v4h-4l-1 5-5 3v-6z"/><path fill="#e0700b" d="M1 0h7v7l-3.500 7L1 8z"/><circle cx="4.500" cy="4.500" r="1.800" fill="#141414"/><circle cx="20" cy="20" r="3.500" fill="#e0700b"/><circle cx="22" cy="14" r="2" fill="#e0700b"/></svg>
    <svg viewBox="0 0 24 24"><path d="M9 2h6l8 10-8 10H9L1 12zM9 2l5 5-8 10M15 22L9 16l8-9M14 7l4-1M6 17l-1-4M14 7l7 7M9 16l-6-6" fill="none" stroke="#8b2d9b" stroke-width="1.200"/></svg>
    <svg viewBox="0 0 24 24"><path d="M1 2h14l8 10-8 10H1l8-10zM3 22L16 3M10 22L20 9M9 12L1 2" fill="none" stroke="#1777d2" stroke-width="1.400"/></svg>
  </div>
  <div class="dots"><i></i><i></i><i></i></div>
  <div class="dash"></div>
  <svg class="scust" width="18" height="20" viewBox="0 0 18 20"><path d="M17 3H5L3 5v3l2 2h8l2 2v3l-2 2H1" fill="none" stroke="#0b447c" stroke-width="4"/><path d="M0 4h18M0 8h18M0 12h18M0 16h18M5 0v20M9 0v20M13 0v20" stroke="#141414" stroke-width=".7"/></svg>
  <div class="wells">
    <div class="vl">Values</div>
    <div class="well">Add data fields here</div>
    <h3>Drill through</h3>
    <div class="row"><span>Cross-report</span><div class="tog"><i></i>Off</div></div>
    <div class="row r2"><span>Keep all filters</span><div class="tog on">On<i></i></div></div>
    <div class="well dark">Add drill-through fields here</div>
  </div>
</aside>
<aside class="datap">
  <div class="phead"><h2>Data</h2><svg width="11" height="12"><path d="M1.500 1l4 5-4 5M5.500 1l4 5-4 5" fill="none" stroke="#fff" stroke-width="1.400"/></svg></div>
  <div class="dsearch"><svg width="19" height="19"><circle cx="8" cy="8" r="6.700" fill="none" stroke="#aaa" stroke-width="1.400"/><path d="M13 13l5 5" stroke="#aaa" stroke-width="1.400"/></svg><span>Search</span></div>
  <div class="tbl"><svg width="6" height="10"><path d="M1 1l4 4-4 4" fill="none" stroke="#eee" stroke-width="1.500"/></svg><svg class="tg" width="16" height="16"><path d="M3 1h10l2 2v10l-2 2H3l-2-2V3zM1 5.500h14M1 10.500h14M5.500 1v14M10.500 1v14" fill="none" stroke="#d6d6d6" stroke-width="1.300"/></svg><span>Student Survey</span></div>
  <div class="tbl"><svg width="6" height="10"><path d="M1 1l4 4-4 4" fill="none" stroke="#eee" stroke-width="1.500"/></svg><svg class="tg" width="16" height="16"><path d="M3 1h10l2 2v10l-2 2H3l-2-2V3zM1 5.500h14M1 10.500h14M5.500 1v14M10.500 1v14" fill="none" stroke="#d6d6d6" stroke-width="1.300"/></svg><span>User Mappings</span></div>
</aside>
</main>
<footer class="status"><span class="pn">Page 3 of 3</span>
  <svg class="zoomer" width="158" height="16"><path d="M1 8h6" stroke="#ddd" stroke-width="2"/><path d="M13 8.500h125M75.500 5v7" stroke="#ddd"/><path fill="#ddd" d="M63 2h5v13h-5z"/><path d="M145 8h10M150 3v10" stroke="#ddd" stroke-width="2"/></svg>
  <span class="pct">86%</span>
  <svg class="fit" width="18" height="13"><rect x=".7" y=".7" width="16.500" height="11.500" rx="2" fill="none" stroke="#ccc" stroke-width="1.300"/><path d="M4 5V3.500h2.500M11.500 3.500H14V5M14 8v1.500h-2.500M6.500 9.500H4V8" fill="none" stroke="#ccc" stroke-width="1.200"/></svg>
</footer>
</div>
</body>
</html>
```
FILE: styles.css
```css
* { box-sizing: border-box; }
body { margin: 0; background: #141414; font-family: "Open Sans", "Noto Sans", sans-serif; font-size: 14px; color: #fff; overflow: hidden; }
h2, h3, h4, p { margin: 0; }
svg { flex: none; display: block; }
svg text { font-family: "Open Sans", sans-serif; }
svg text.serif { font-family: "Liberation Serif", serif; }
.app { width: 1919px; height: 1076px; display: flex; flex-direction: column; }

.titlebar { height: 42px; flex: none; display: flex; align-items: flex-start; white-space: nowrap; color: #d6d6d6; }
.quick { margin: 8px 0 0 20px; width: 100px; }
.project { width: 280px; margin: 14px 0 0 6px; font-size: 14px; line-height: 20px; letter-spacing: .2px; }
.tri { margin: 17px 0 0 7px; }
.topsearch { margin: 6px 0 0 352px; width: 500px; height: 30px; background: #1f1f1f; border-radius: 3px; display: flex; align-items: center; gap: 14px; padding: 1px 0 0 20px; font-size: 16px; color: #bdbdbd; }
.user { margin: 12px 0 0 318px; width: 104px; line-height: 20px; font-size: 14.300px; }
.avatar { margin: 9px 0 0 12px; }
.winbtns { margin: 14px 0 0 38px; }

.menubar { height: 46px; flex: none; display: flex; align-items: flex-start; padding-left: 29px; font-size: 16px; color: #d0d0d0; line-height: 24px; letter-spacing: .4px; }
.menubar > span { padding-top: 9px; }
.m1 { width: 70px; } .m2 { width: 80px; } .m3 { width: 76px; } .m4 { width: 108px; } .m5 { width: 69px; } .m6 { width: 102px; } .m7 { width: 60px; }
.menubar .active { color: #fff; font-weight: 700; letter-spacing: -.1px; width: 50px; margin-right: 29px; height: 38px; border-bottom: 2px solid #2aaa92; }
.share { margin: 6px 6px 0 auto; width: 104px; height: 30px; border: 0; border-radius: 5px; background: #0f6b5c; color: #c7d8d4; display: flex; align-items: center; font: 14px "Open Sans", sans-serif; padding: 0 10px 0 7px; justify-content: space-between; }
.share span { margin-left: 4px; }

.ribbon { position: relative; margin: 0 10px; width: 1900px; height: 125px; flex: none; background: #292929; border-radius: 12px; display: flex; padding: 5px 0; z-index: 2; box-shadow: 0 2px 4px rgba(0,0,0,.15); }
.group { border-right: 1px solid #424242; display: flex; flex-direction: column; height: 115px; flex: none; }
.items { display: flex; height: 92px; padding-top: 5px; }
.gname { text-align: center; font-size: 12px; line-height: 16px; margin-top: 4px; }
.clip { width: 201px; } .data { width: 450px; } .data .items { padding-left: 4px; } .queries { width: 145px; } .insert { width: 184px; } .calc { width: 233px; } .sens { width: 92px; } .shareg { width: 73px; } .cop { width: 165px; }
.cmd { display: flex; flex-direction: column; align-items: center; white-space: nowrap; text-align: center; font-size: 13.500px; line-height: 20px; letter-spacing: .15px; }
.cmd span { margin-top: 3px; }
.off { color: #5f5f5f; }
.w31 { width: 31px; } .w34 { width: 34px; } .w38 { width: 38px; } .w39 { width: 39px; } .w42 { width: 42px; } .w58 { width: 58px; } .w62 { width: 62px; } .w70 { width: 70px; } .w72 { width: 72px; } .w80 { width: 80px; } .w82 { width: 82px; } .w90 { width: 90px; } .w91 { width: 91px; } .w108 { width: 108px; } .w110 { width: 110px; }
.dn { display: inline-block; width: 5px; height: 5px; border: solid currentColor; border-width: 0 2px 2px 0; transform: rotate(45deg); margin: 0 1px 3px 4px; }
.paste { width: 52px; margin-left: 9px; }
.paste svg { margin-left: 4px; }
.prep { margin-left: 4px; }
.smalls { display: flex; flex-direction: column; color: #5f5f5f; font-size: 13.500px; gap: 12px; margin-left: 3px; white-space: nowrap; letter-spacing: .3px; }
.small { display: flex; align-items: center; height: 20px; gap: 5px; }
.collapse { position: absolute; right: 9px; top: 103px; }

.main { flex: 1; display: flex; min-height: 0; border-bottom: 1px solid #666; }
.rail { width: 51px; border-right: 1px solid #333; }
.rail div { height: 50px; display: flex; align-items: center; justify-content: center; padding-bottom: 3px; }
.rail .on { border-left: 3px solid #2aaa92; padding-right: 3px; }
.rail .sel { background: #292929; }
.center { width: 1417px; display: flex; flex-direction: column; flex: none; }
.work { height: 793px; display: flex; background: #fff; color: #111; }
.canvas { width: 1376px; display: flex; flex-direction: column; }
.visual { width: 1344px; margin-left: 17px; height: 757px; display: flex; flex-direction: column; }
.vtools { height: 44px; flex: none; display: flex; align-items: center; padding: 6px 0 0 332px; color: #5a5a5a; font-size: 14px; letter-spacing: .15px; white-space: nowrap; }
.t { display: flex; align-items: center; gap: 9px; width: 80px; flex: none; }
.live { color: #111; } .redo { width: 79px; } .clr { width: 139px; } .iso { width: 88px; gap: 8px; } .exc { width: 94px; gap: 7px; }
.stp { width: 378px; }
.vbody { display: flex; height: 713px; }
.panel { width: 322px; flex: none; display: flex; flex-direction: column; }
.counts { height: 71px; background: #ebebeb; border-bottom: 1px solid #ddd; display: flex; padding: 15px 13px 0 12px; flex: none; }
.counts div { width: 99px; height: 39px; background: #fff; border: 1px solid #ccc; display: flex; flex-direction: column; align-items: center; font-size: 14px; line-height: 18px; }
.counts b { font-weight: 400; font-size: 11.500px; line-height: 17px; letter-spacing: -.1px; }
.pmain { flex: 1; display: flex; min-height: 0; background: #f9f9f9; }
.ptabs { width: 54px; background: #e0e0e0; }
.ptabs div { height: 64.500px; display: flex; align-items: center; justify-content: center; }
.ptabs .cur { background: #fafafa; }
.form { width: 251px; padding: 0 12px 0 13px; overflow: hidden; letter-spacing: .1px; }
.radios { display: flex; height: 22px; margin-top: 15px; }
.radios.clipped { height: 19px; margin-top: -16px; }
.radios label { width: 112px; display: flex; align-items: center; gap: 5px; white-space: nowrap; }
.radios i { width: 22px; height: 22px; border: 1.500px solid #222; border-radius: 50%; background: #fff; flex: none; }
.radios.clipped i { margin-top: -2px; }
.radios .chk { border-color: #0078d4; background: radial-gradient(#0078d4 5px, #fff 6px); }
.form hr { border: 0; height: 2px; background: #e2e2e2; margin: 23px 0 0; }
.sect { font-size: 12px; letter-spacing: 3.500px; color: #555; line-height: 18px; margin: 13px 0 22px; white-space: nowrap; }
.lab { font-weight: 600; font-size: 14px; line-height: 18px; height: 18px; margin: 19px 0 5px; letter-spacing: .05px; }
.lab.l1 { margin-top: 0; margin-bottom: 6px; } .lab.l2 { margin-top: 16px; margin-bottom: 4px; } .lab.l3 { margin-top: 15px; margin-bottom: 6px; }
.lab.dim { color: #666; }
.select { height: 35px; border: 1px solid #666; border-radius: 2px; background: #fff; padding: 0 9px 0 9px; display: flex; align-items: center; justify-content: space-between; letter-spacing: 0; }
.select i { width: 9px; height: 9px; border: solid #333; border-width: 0 1px 1px 0; transform: rotate(45deg); margin: -6px 0 0; }
.ghost { background: #f3f2f1; border-color: #f3f2f1; }
.slider { height: 30px; display: flex; align-items: center; padding-left: 8px; }
.track { width: 150px; height: 4px; border-radius: 2px; background: #333; display: flex; align-items: center; padding-left: 5px; }
.track i { width: 17px; height: 17px; border: 2px solid #333; border-radius: 50%; background: #fff; }
.slider span { margin-left: 16px; font-weight: 600; font-size: 13px; letter-spacing: -.5px; }
.scroll { width: 17px; background: #fcfcfc; display: flex; flex-direction: column; align-items: center; justify-content: space-between; padding: 6px 0 5px; margin-left: auto; }
.thumb { width: 10px; height: 391px; border-radius: 5px; background: #8a8a8a; margin-bottom: 79px; }
.up, .down { border: 6px solid transparent; width: 0; height: 0; }
.up { border-bottom: 8px solid #8a8a8a; border-top: 0; }
.down { border-top: 8px solid #8a8a8a; border-bottom: 0; }
.plot { position: relative; width: 1022px; border-top: 1px solid #d9d9d9; }
.chart { display: block; }
.orbit { position: absolute; left: 9px; top: 9px; }
.gem { position: absolute; right: 13px; top: 11px; }
.chart text { fill: #444; }
.ticks text, .axis text { text-anchor: middle; }
.axis text { fill: #333; }
.deepgreen .f { fill: #319e52; } .deepgreen .t { fill: #1c592c; } .deepgreen .s { fill: #164722; }
.green .f { fill: #82c769; } .green .t { fill: #476e39; } .green .s { fill: #3b5a2d; }
.lime .f { fill: #c6e681; } .lime .t { fill: #6d7f48; } .lime .s { fill: #5a683a; }
.cream .f { fill: #f5f1a7; } .cream .t { fill: #88855e; } .cream .s { fill: #6f6f4c; }
.sand .f { fill: #facc80; } .sand .t { fill: #897145; } .sand .s { fill: #725b38; }
.rust .f { fill: #f48c51; } .rust .t { fill: #864b2b; } .rust .s { fill: #6e3d24; }
.red .f { fill: #d73e30; } .red .t { fill: #77211b; } .red .s { fill: #601a15; }
.legend { position: absolute; right: 14px; top: 69px; width: 117px; height: 227px; background: #fff; border: 1px solid #ccc; box-shadow: 4px 6px 10px rgba(0,0,0,.14); font-size: 12.500px; color: #222; padding-top: 9px; }
.legend svg { margin-left: 91px; }
.legend h4 { text-align: center; color: #005a9e; font-size: 13.500px; line-height: 18px; margin: 10px 0 0; }
.legend p { height: 22.400px; display: flex; align-items: center; gap: 5px; padding-left: 16px; white-space: nowrap; }
.legend i { width: 13px; height: 13px; border: 1px solid rgba(0,0,0,.3); border-left-color: rgba(255,255,255,.3); border-top-color: rgba(255,255,255,.3); }
.c1 { background: #d73e30; } .c2 { background: #f88d52; } .c3 { background: #fdce80; } .c4 { background: #f8f4aa; } .c5 { background: #c8e883; } .c6 { background: #84ca6a; } .c7 { background: #319e52; }
.pageedge { margin-top: 16px; border-top: 2px dotted #555; }
.filters { width: 41px; border-left: 1px solid #b3b3b3; padding: 17px 0 0 15px; }
.filters .fi { margin: 25px 0 0 2px; }
.filters span { display: block; writing-mode: vertical-rl; margin: 10px 0 0 -8px; font-size: 17.500px; font-weight: 500; line-height: 24px; letter-spacing: .3px; }
.pages { height: 44px; background: #292929; display: flex; font-size: 14px; }
.dev { width: 30px; margin-left: 13px; padding: 8px 3px 0; height: 39px; border-bottom: 4px solid #2aaa92; }
.ph { margin: 8px 0 0 33px; }
.nav { width: 71px; display: flex; gap: 19px; padding: 16px 0 0 27px; border-right: 1px solid #666; margin-right: -1px; }
.pg { width: 95px; border-right: 1px solid #444; text-align: center; line-height: 45px; letter-spacing: .1px; }
.pg.act { width: 97px; font-weight: 700; border-bottom: 5px solid #2aaa92; border-right: 0; letter-spacing: -.1px; }
.plus { width: 49px; background: #2aaa92; display: flex; align-items: center; justify-content: center; padding-bottom: 3px; }

.viz { width: 227px; flex: none; border: solid #666; border-width: 0 1px; }
.phead { display: flex; justify-content: space-between; align-items: center; padding: 13px 12px 0 10px; height: 39px; }
h2 { font-size: 18.500px; font-weight: 500; line-height: 26px; letter-spacing: .3px; }
h3 { font-size: 14px; font-weight: 600; line-height: 20px; letter-spacing: 0; }
.viz > h3 { margin: 10px 0 4px 10px; }
.modes { display: flex; align-items: center; gap: 48px; padding-left: 10px; height: 40px; }
.m { width: 40px; height: 40px; background: #292929; border-radius: 3px; padding: 3px 4px; }
.notch { margin-top: 6px; }
.gallery { display: grid; grid-template-columns: repeat(6, 24px); grid-auto-rows: 24px; gap: 11px; margin: 11px 0 0 13px; }
.gallery svg { width: 24px; height: 24px; overflow: visible; }
.gallery .lt text { fill: #3b93d6; stroke: #3b93d6; stroke-width: .6px; }
.gallery .b { fill: #0066b8; stroke: #5aa9e6; } .gallery .g { fill: #555; stroke: #888; } .gallery .l { fill: none; stroke: #b8b8b8; stroke-width: 1.300px; } .gallery .bl { fill: none; stroke: #4ea3e3; stroke-width: 1.400px; }
.dots { display: flex; gap: 3px; margin: 20px 0 0 19px; } .dots i { width: 2px; height: 2px; background: #fff; }
.dash { margin: 21px 7px 0 8px; border-top: 1px dashed #ddd; }
.scust { margin: 11px 0 0 16px; }
.wells { margin-top: 12px; border-top: 1px solid #d6d6d6; padding: 11px 7px 0 5px; letter-spacing: .15px; }
.vl { padding-left: 9px; line-height: 20px; }
.well { margin-top: 6px; height: 36px; border: 1px dashed #777; line-height: 34px; padding-left: 13px; white-space: nowrap; }
.wells h3 { margin: 13px 0 11px 10px; letter-spacing: .2px; }
.row { display: flex; justify-content: space-between; align-items: center; padding: 0 20px 0 10px; height: 20px; }
.row.r2 { margin-top: 14px; }
.row.r2 span { margin-top: -2px; }
.tog { width: 40px; height: 20px; border: 1px solid #aaa; border-radius: 10px; display: flex; align-items: center; justify-content: center; gap: 2px; font-size: 10.500px; color: #aaa; letter-spacing: 0; }
.tog i { width: 10px; height: 10px; border-radius: 50%; background: #aaa; }
.tog.on { background: #2aaa92; border-color: #2aaa92; color: #222; } .tog.on i { background: #222; }
.well.dark { margin-top: 12px; height: 32px; background: #000; line-height: 32px; padding-left: 10px; }
.datap { flex: 1; }
.datap .phead { padding-left: 11px; padding-right: 11px; }
.dsearch { margin: 19px 4px 0 5px; height: 30px; border: 1px solid #707070; border-bottom-color: #aaa; border-radius: 4px; background: #242424; display: flex; align-items: center; gap: 7px; padding: 1px 0 0 14px; color: #999; font-size: 16px; letter-spacing: .1px; }
.tbl { display: flex; align-items: center; height: 20px; padding-left: 21px; margin-top: 10px; letter-spacing: -.05px; }
.dsearch + .tbl { margin-top: 16px; }
.tg { margin: 0 7px 0 9px; }
.status { height: 25px; flex: none; display: flex; align-items: center; padding: 5px 22px 0 5px; color: #d0d0d0; font-size: 14px; letter-spacing: .15px; }
.zoomer { margin: -3px 0 0 auto; }
.pct { margin: -3px 25px 0 14px; width: 28px; font-size: 13.500px; letter-spacing: -.3px; }
.fit { margin-top: 1px; }
```
